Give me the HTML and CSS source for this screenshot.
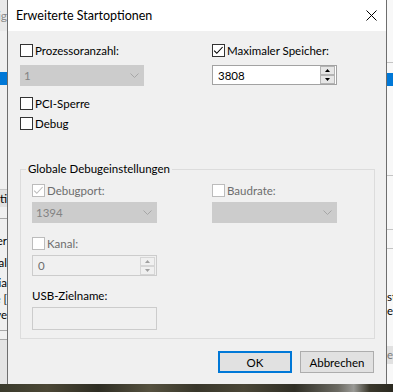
FILE: index.html
```html
<!DOCTYPE html>
<html lang="de">
<head>
<meta charset="utf-8">
<title>Erweiterte Startoptionen</title>
<link rel="stylesheet" href="styles.css">
</head>
<body>
<div class="desk">
  <div class="strip strip-left">
    <div class="sl-title frag"><span>Anzeig</span></div>
    <div class="sl-a"></div>
    <div class="sel"></div>
    <div class="sl-b"></div>
    <div class="sl-btn frag"><span>Opti</span></div>
    <div class="sl-c"></div>
    <div class="hline"></div>
    <div class="sl-d"></div>
    <div class="txt frag"><span>Speicher</span></div>
    <div class="sl-e"></div>
    <div class="txt frag"><span>Kanal</span></div>
    <div class="sl-f"></div>
    <div class="txt frag"><span>Media</span></div>
    <div class="sl-g"></div>
    <div class="txt frag"><span>Gerate [</span></div>
    <div class="sl-g"></div>
    <div class="txt frag"><span>Erweitve</span></div>
    <div class="sl-h"></div>
    <div class="hline"></div>
    <div class="sl-i"></div>
    <div class="hline"></div>
    <div class="sl-rest"></div>
  </div>

  <div class="dialog">
    <div class="titlebar">
      <span class="title">Erweiterte Startoptionen</span>
      <svg class="close" width="11" height="11" viewBox="0 0 11 11"><path d="M0.5 0.5 L10.5 10.5 M10.5 0.5 L0.5 10.5" stroke="#000" stroke-width="1" fill="none"/></svg>
    </div>
    <div class="client">
      <div class="top">
        <div class="col">
          <div class="check"><span class="box"></span><span class="lbl">Prozessoranzahl:</span></div>
          <div class="combo dis w124 mt8"><span>1</span><svg class="chev" width="9" height="5" viewBox="0 0 9 5"><polyline points="0.5,0.5 4.5,4.5 8.5,0.5" fill="none" stroke="#a6a6a6" stroke-width="1"/></svg></div>
          <div class="check mt11"><span class="box"></span><span class="lbl">PCI-Sperre</span></div>
          <div class="check mt7"><span class="box"></span><span class="lbl">Debug</span></div>
        </div>
        <div class="col">
          <div class="check"><span class="box"><svg width="11" height="11" viewBox="0 0 11 11"><polyline points="1.2,5.6 3.8,8.3 9.6,2" fill="none" stroke="#000" stroke-width="1.1"/></svg></span><span class="lbl">Maximaler Speicher:</span></div>
          <div class="spin mt8">
            <span class="val">3808</span>
            <span class="sbtns">
              <span class="sb"><svg width="5" height="3" viewBox="0 0 5 3"><polygon points="0,3 2.5,0 5,3" fill="#000"/></svg></span>
              <span class="sb"><svg width="5" height="3" viewBox="0 0 5 3"><polygon points="0,0 5,0 2.5,3" fill="#000"/></svg></span>
            </span>
          </div>
        </div>
      </div>

      <fieldset class="group">
        <legend>Globale Debugeinstellungen</legend>
        <div class="ggrid">
          <div class="col">
            <div class="check dis"><span class="box dbox"><svg width="11" height="11" viewBox="0 0 11 11"><polyline points="1.2,5.6 3.8,8.3 9.6,2" fill="none" stroke="#bcbcbc" stroke-width="1.1"/></svg></span><span class="lbl">Debugport:</span></div>
            <div class="combo dis w125 mt5"><span>1394</span><svg class="chev" width="9" height="5" viewBox="0 0 9 5"><polyline points="0.5,0.5 4.5,4.5 8.5,0.5" fill="none" stroke="#a6a6a6" stroke-width="1"/></svg></div>
            <div class="check dis mt14"><span class="box dbox"></span><span class="lbl">Kanal:</span></div>
            <div class="spin dspin mt5">
              <span class="val">0</span>
              <span class="sbtns">
                <span class="sb"><svg width="5" height="3" viewBox="0 0 5 3"><polygon points="0,3 2.5,0 5,3" fill="#a0a0a0"/></svg></span>
                <span class="sb"><svg width="5" height="3" viewBox="0 0 5 3"><polygon points="0,0 5,0 2.5,3" fill="#a0a0a0"/></svg></span>
              </span>
            </div>
            <div class="usb">USB-Zielname:</div>
            <div class="textbox"></div>
          </div>
          <div class="col">
            <div class="check dis"><span class="box dbox"></span><span class="lbl">Baudrate:</span></div>
            <div class="combo dis w125 mt5"><span></span><svg class="chev" width="9" height="5" viewBox="0 0 9 5"><polyline points="0.5,0.5 4.5,4.5 8.5,0.5" fill="none" stroke="#a6a6a6" stroke-width="1"/></svg></div>
          </div>
        </div>
      </fieldset>

      <div class="buttons">
        <div class="btn default">OK</div>
        <div class="btn">Abbrechen</div>
      </div>
    </div>
  </div>

  <div class="strip strip-right">
    <div class="sr-a"></div>
    <div class="rline"></div>
    <div class="sr-b"></div>
    <div class="sel"></div>
    <div class="sr-c"></div>
    <div class="rline"></div>
    <div class="sr-d"></div>
    <div class="rline"></div>
    <div class="sr-e"></div>
    <div class="rline"></div>
    <div class="sr-f"></div>
    <div class="rtxt">st</div>
    <div class="rtxt">el</div>
    <div class="sr-g"></div>
    <div class="rbtn">e</div>
    <div class="sr-rest"></div>
  </div>
</div>
<div class="photo"></div>
</body>
</html>
```

FILE: styles.css
```css
html, body {
  margin: 0;
  padding: 0;
}

body {
  width: 393px;
  height: 392px;
  overflow: hidden;
  font-family: Lato, "Liberation Sans", sans-serif;
  font-size: 11.5px;
  color: #000;
  background: #2f2e24;
}

.desk {
  display: flex;
  height: 384px;
}

/* background windows */
.strip {
  display: flex;
  flex-direction: column;
  overflow: hidden;
}

.strip-left {
  width: 7px;
  background: #f0f0f0;
}

.frag {
  display: flex;
  justify-content: flex-end;
  align-items: center;
  overflow: hidden;
  white-space: nowrap;
}

.sl-title {
  height: 31px;
  background: #e9e9e9;
  color: #8a8a8a;
  font-size: 12px;
}

.sl-a { height: 41px; }
.sel { height: 13px; background: #0078d7; }
.sl-b { height: 104px; }
.sl-btn { height: 17px; background: #e1e1e1; border-top: 1px solid #c8c8c8; }
.sl-c { height: 11px; }
.hline { height: 1px; background: #a8a8a8; }
.sl-d { height: 14px; }
.txt { height: 14px; }
.sl-e { height: 8px; }
.sl-f { height: 6px; }
.sl-g { height: 2px; }
.sl-h { height: 9px; }
.sl-i { height: 8px; }
.sl-rest { flex: 1; background: #e4e4e4; }

.strip-right {
  width: 6px;
  background: #f8f8f8;
}

.sr-a { height: 62px; }
.rline { height: 1px; background: #c4c4c4; }
.sr-b { height: 10px; }
.sr-c { height: 89px; }
.sr-d { height: 53px; }
.sr-e { height: 18px; }
.sr-f { height: 41px; }
.rtxt { height: 14px; line-height: 14px; white-space: nowrap; }
.sr-g { height: 28px; }
.rbtn { height: 18px; line-height: 18px; background: #e1e1e1; color: #7a7a7a; }
.sr-rest { flex: 1; }

.photo {
  height: 8px;
  background: linear-gradient(90deg, #3a3a2c 0%, #4b4735 12%, #2e2d23 25%, #55513f 38%, #38362a 50%, #4a4636 62%, #2f2e25 75%, #6b6a62 86%, #9a9a96 90%, #3a382c 94%, #2a2920 100%);
}

/* dialog */
.dialog {
  width: 378px;
  border-left: 1px solid #6e6e6e;
  border-right: 1px solid #6e6e6e;
  display: flex;
  flex-direction: column;
  background: #f0f0f0;
}

.titlebar {
  height: 31px;
  background: #fff;
  display: flex;
  align-items: center;
  justify-content: space-between;
  padding: 0 9px 0 8px;
  font-size: 12.5px;
}

.close {
  display: block;
}

.client {
  flex: 1;
  padding: 13px 12px 0 12px;
}

.top {
  display: grid;
  grid-template-columns: 192px 1fr;
}

.col {
  display: flex;
  flex-direction: column;
  align-items: flex-start;
}

.check {
  display: flex;
  align-items: center;
  height: 13px;
  gap: 2px;
}

.box {
  width: 13px;
  height: 13px;
  box-sizing: border-box;
  border: 1px solid #333;
  background: #fff;
  display: flex;
}

.box svg { display: block; }

.check.dis .lbl { color: #6d6d6d; }
.dbox { border-color: #bcbcbc; }

.mt5 { margin-top: 5px; }
.mt7 { margin-top: 7px; }
.mt8 { margin-top: 8px; }
.mt11 { margin-top: 11px; }
.mt14 { margin-top: 14px; }

.combo {
  height: 21px;
  box-sizing: border-box;
  border: 1px solid #ccc;
  background: #ccc;
  display: flex;
  align-items: center;
  justify-content: space-between;
  padding: 0 4px 0 3px;
  color: #838383;
}

.w124 { width: 124px; }
.w125 { width: 125px; }

.chev { display: block; }

.spin {
  width: 125px;
  height: 20px;
  box-sizing: border-box;
  border: 1px solid #a2a2a2;
  background: #fff;
  display: flex;
  align-items: center;
  justify-content: space-between;
  padding: 0 1px 0 5px;
}

.dspin {
  height: 21px;
  background: #f0f0f0;
  border-color: #cccccc;
  color: #6d6d6d;
}

.sbtns {
  display: flex;
  flex-direction: column;
}

.sb {
  width: 15px;
  height: 9px;
  box-sizing: border-box;
  border: 1px solid #b4b4b4;
  background: #e6e6e6;
  display: flex;
  align-items: center;
  justify-content: center;
}

.dspin .sb {
  border-color: #d6d6d6;
  background: #f0f0f0;
}

.sb svg { display: block; }

.group {
  margin: 32px 0 0 0;
  padding: 0 11px 8px 11px;
  border: 1px solid #dcdcdc;
  width: 355px;
  box-sizing: border-box;
  min-width: 0;
}

.group legend {
  padding: 0 2px;
  margin-left: -6px;
  line-height: 14px;
}

.ggrid {
  display: grid;
  grid-template-columns: 180px 1fr;
  margin-top: 8px;
}

.usb {
  margin-top: 13px;
  line-height: 14px;
}

.textbox {
  margin-top: 4px;
  width: 125px;
  height: 23px;
  box-sizing: border-box;
  border: 1px solid #cccccc;
  background: #f0f0f0;
}

.buttons {
  display: flex;
  justify-content: flex-end;
  gap: 8px;
  margin-top: 12px;
}

.btn {
  width: 74px;
  height: 22px;
  box-sizing: border-box;
  border: 1px solid #adadad;
  background: #e1e1e1;
  display: flex;
  align-items: center;
  justify-content: center;
}

.btn.default {
  border: 2px solid #0078d7;
}
```
